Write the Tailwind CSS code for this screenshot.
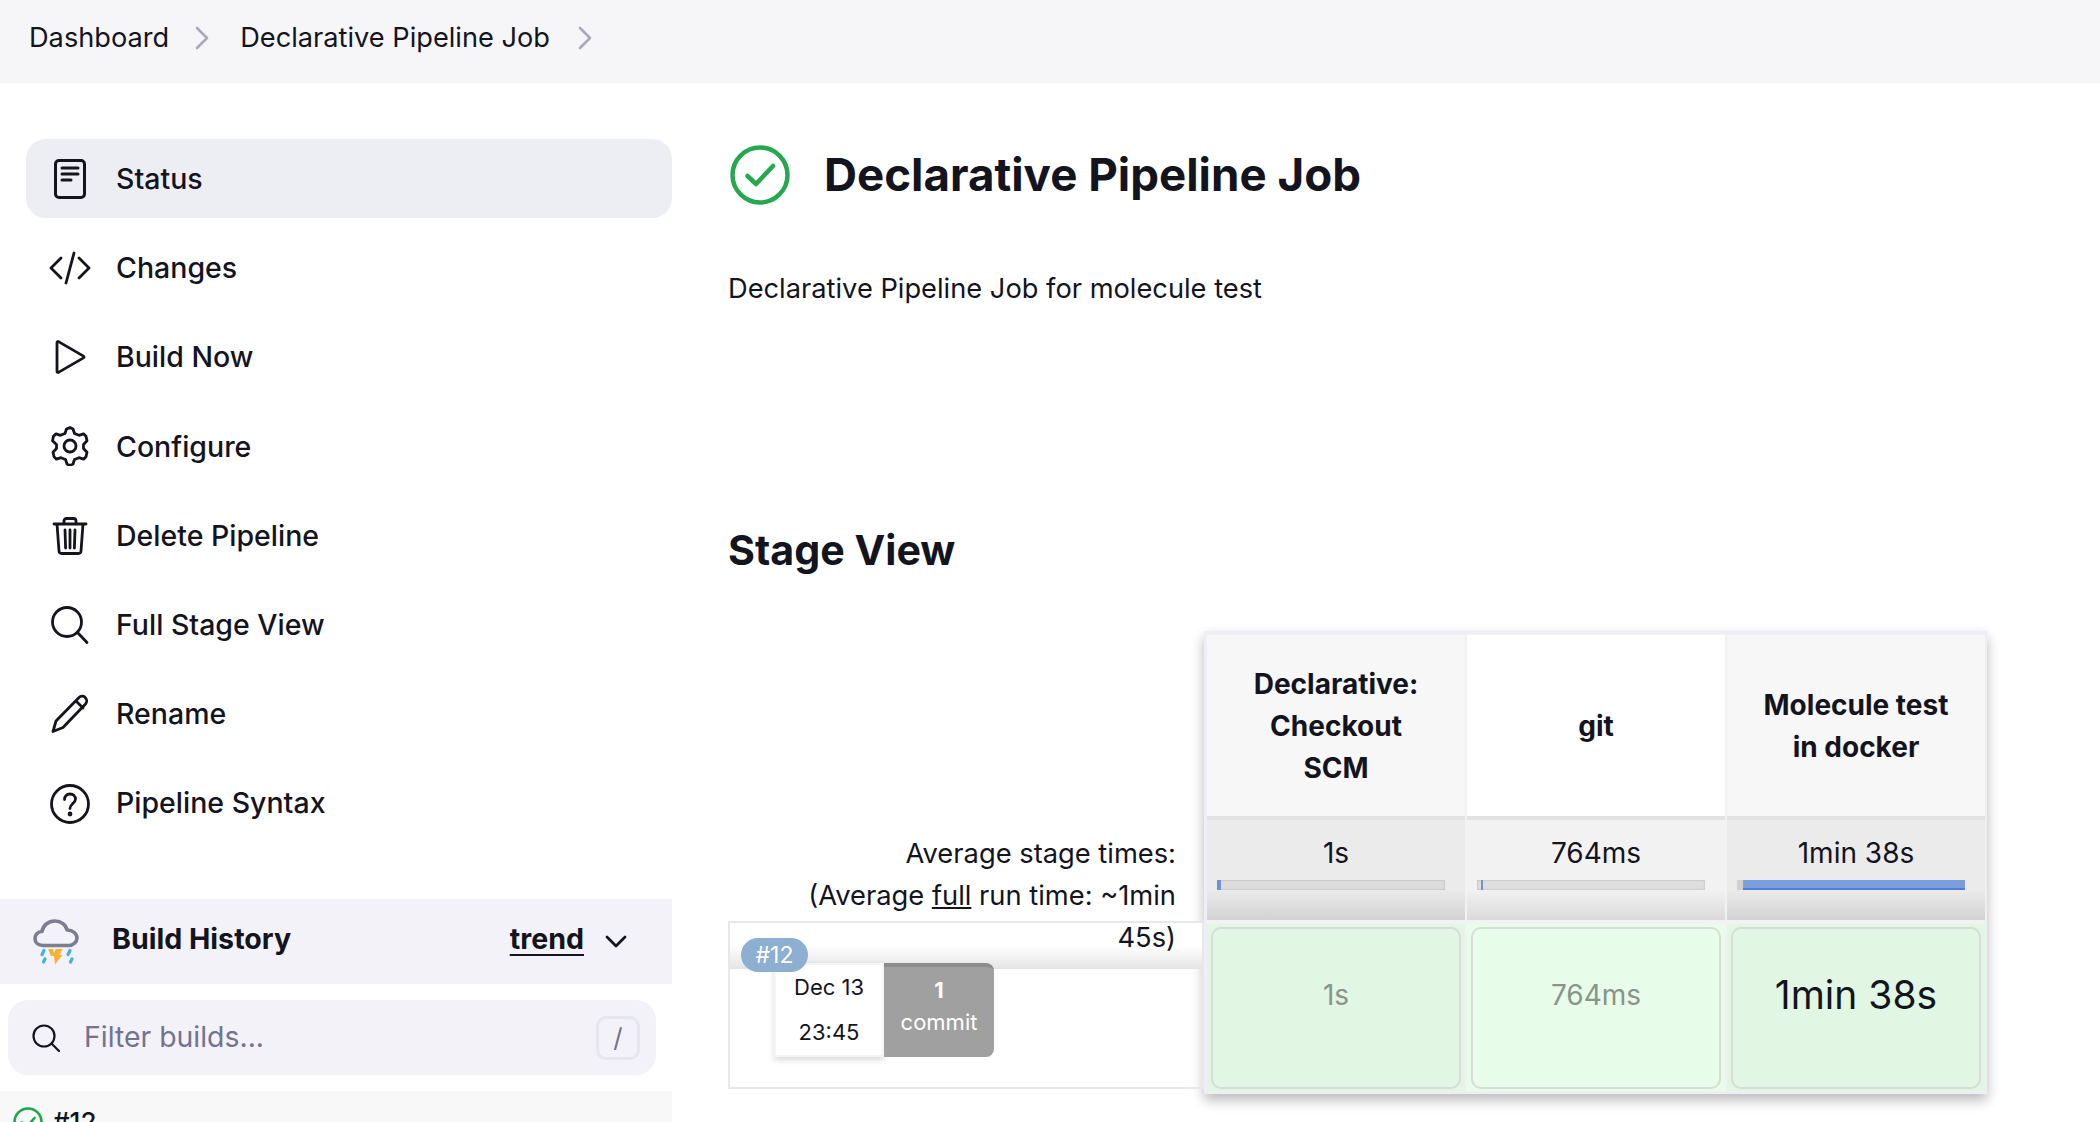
<!DOCTYPE html>
<html lang="en">
<head>
  <meta charset="UTF-8" />
  <title>Declarative Pipeline Job</title>
  <script src="https://cdn.jsdelivr.net/npm/@tailwindcss/browser@4"></script>
</head>
<body class="h-[1122px] overflow-hidden bg-white font-['Inter',sans-serif] text-[#14141f]">

  <!-- Breadcrumb -->
  <div class="flex h-[83px] items-center bg-[#f6f6f9] pb-[7px] pl-[29px] text-[27.2px]">
    <span>Dashboard</span>
    <svg class="ml-[27px] h-[24px] w-[14px] -translate-x-px" viewBox="0 0 14 24" fill="none" stroke="#a9a9b8" stroke-width="2.6" stroke-linecap="round" stroke-linejoin="round"><path d="M2 2l10 10L2 22"/></svg>
    <span class="ml-[30px]">Declarative Pipeline Job</span>
    <svg class="ml-[28px] h-[24px] w-[14px]" viewBox="0 0 14 24" fill="none" stroke="#a9a9b8" stroke-width="2.6" stroke-linecap="round" stroke-linejoin="round"><path d="M2 2l10 10L2 22"/></svg>
  </div>

  <div class="flex">
    <!-- Sidebar -->
    <aside class="w-[672px] shrink-0 pt-[56px]">
      <nav class="pl-[26px] text-[28.5px] font-medium">
        <a class="flex h-[79px] items-center rounded-[20px] bg-[#edeef3]">
          <svg class="ml-[24px] h-[40px] w-[40px]" viewBox="0 0 40 40" fill="none" stroke="#14141f" stroke-width="3" stroke-linecap="round"><rect x="5.5" y="1.5" width="29" height="37" rx="3.5"/><path d="M12 9h16M12 15h16M12 21h9"/></svg>
          <span class="mt-[1px] ml-[26px]">Status</span>
        </a>
        <a class="mt-[10.3px] flex h-[79px] items-center">
          <svg class="ml-[23px] h-[42px] w-[42px]" viewBox="0 0 42 42" fill="none" stroke="#14141f" stroke-width="2.8" stroke-linecap="round" stroke-linejoin="round"><path d="M12 11L2 21l10 10M30 11l10 10-10 10M25 6l-8 30"/></svg>
          <span class="mt-[1px] ml-[25px]">Changes</span>
        </a>
        <a class="mt-[10.3px] flex h-[79px] items-center">
          <svg class="ml-[24px] h-[40px] w-[40px]" viewBox="0 0 40 40" fill="none" stroke="#14141f" stroke-width="2.8" stroke-linejoin="round"><path d="M7 5.5c0-.8.8-1.3 1.5-.9l25 14.5c.7.4.7 1.4 0 1.8l-25 14.500c-.7.4-1.500-.1-1.500-.9z"/></svg>
          <span class="mt-[1px] ml-[26px]">Build Now</span>
        </a>
        <a class="mt-[10.3px] flex h-[79px] items-center">
          <svg class="ml-[24px] h-[40px] w-[40px]" viewBox="0 0 40 40" fill="none" stroke="#14141f" stroke-width="2.8" stroke-linejoin="round"><circle cx="20" cy="20" r="6"/><path d="M20 2l3 1.500 1.500 4.500 4.500 1.800 4.500-1.500 2.500 2.500 1 4.500-3.500 3.700v4l3.500 3.700-1 4.500-2.500 2.500-4.500-1.500-4.500 1.800-1.500 4.500-3 1.500-3-1.500-1.500-4.500-4.500-1.800-4.500 1.500-2.500-2.500-1-4.500 3.500-3.700v-4L2.500 15.300l1-4.500L6 8.300l4.500 1.500L15 8l1.500-4.500z" transform="translate(0 -0.500)"/></svg>
          <span class="mt-[1px] ml-[26px]">Configure</span>
        </a>
        <a class="mt-[10.3px] flex h-[79px] items-center">
          <svg class="ml-[24px] h-[40px] w-[40px]" viewBox="0 0 40 40" fill="none" stroke="#14141f" stroke-width="2.8" stroke-linecap="round" stroke-linejoin="round"><path d="M4 8h32M14 8V5c0-1.500 1-2.500 2.500-2.500h7C25 2.500 26 3.500 26 5v3M7 8l2 27c.1 1.500 1.200 2.500 2.700 2.500h16.600c1.500 0 2.600-1 2.700-2.500L33 8M15 14l.6 18M20 14v18M25 14l-.6 18"/></svg>
          <span class="mt-[1px] ml-[26px]">Delete Pipeline</span>
        </a>
        <a class="mt-[10.3px] flex h-[79px] items-center">
          <svg class="ml-[24px] h-[40px] w-[40px]" viewBox="0 0 40 40" fill="none" stroke="#14141f" stroke-width="2.8" stroke-linecap="round"><circle cx="17" cy="17" r="14.500"/><path d="M27.500 27.500L37 37.500"/></svg>
          <span class="ml-[26px]">Full Stage View</span>
        </a>
        <a class="mt-[10.3px] flex h-[79px] items-center">
          <svg class="ml-[24px] h-[40px] w-[40px]" viewBox="0 0 40 40" fill="none" stroke="#14141f" stroke-width="2.8" stroke-linecap="round" stroke-linejoin="round"><path d="M29 3.500c2-2 5-1.500 6.500.3 1.500 1.800 1.700 4.500-.2 6.400L13 33.500 3 37.500l3-10.500zM26 7l7 7"/></svg>
          <span class="ml-[26px]">Rename</span>
        </a>
        <a class="mt-[10.3px] flex h-[79px] items-center">
          <svg class="ml-[24px] h-[40px] w-[40px]" viewBox="0 0 40 40" fill="none" stroke="#14141f" stroke-width="2.800" stroke-linecap="round"><circle cx="20" cy="20" r="18.500"/><path d="M14.500 15.500c0-3.200 2.400-5.500 5.500-5.500s5.500 2.200 5.500 5c0 4.500-5.500 4.500-5.500 9.500"/><circle cx="20" cy="30" r="1" fill="#14141f"/></svg>
          <span class="ml-[26px]">Pipeline Syntax</span>
        </a>
      </nav>

      <!-- Build history -->
      <div class="mt-[56px] flex h-[85px] items-center bg-[#f2f2f8] pl-[33px] text-[28.6px]">
        <svg class="h-[46px] w-[46px]" viewBox="0 0 46 46" fill="none" stroke-linecap="round">
          <path d="M10 26.500c-5 0-8-3-8-7s3-7 7-7c1-6 6-10.500 13-10.500 6 0 11 4 12 9 6 0 10 4 10 8s-4 7.500-8 7.500z" stroke="#7d7d91" stroke-width="3.600" stroke-linejoin="round"/>
          <path d="M15 30h5l1 4 2-4h6.500l-3 6h3L22 45.500l-1-8.500h-3z" fill="#f9b233"/>
          <path d="M11 31.500l-2 4M12 40l-1.500 3M37 31.500l-2 4M39 40l-1.500 3" stroke="#39b4ea" stroke-width="3.200"/>
        </svg>
        <span class="ml-[33px] pb-[5px] font-bold">Build History</span>
        <span class="ml-auto pb-[5px] font-bold underline underline-offset-[5px]">trend</span>
        <svg class="mr-[45px] ml-[21px] h-[14px] w-[22px]" viewBox="0 0 22 14" fill="none" stroke="#14141f" stroke-width="2.800" stroke-linecap="round" stroke-linejoin="round"><path d="M2 2l9 9 9-9"/></svg>
      </div>

      <div class="mt-[16px] ml-[8px] flex h-[75px] w-[648px] items-center rounded-[20px] bg-[#f2f2f8] pl-[24px] text-[28.4px] text-[#737390]">
        <svg class="h-[28px] w-[28px]" viewBox="0 0 28 28" fill="none" stroke="#14141f" stroke-width="2.200" stroke-linecap="round"><circle cx="12" cy="12" r="10.500"/><path d="M19.500 19.500L27 27"/></svg>
        <span class="ml-[24px]">Filter builds...</span>
        <span class="mr-[16px] ml-auto flex h-[44px] w-[44px] items-center justify-center rounded-[10px] border-[3px] border-[#e6e6ef] text-[26px]">/</span>
      </div>

      <div class="mt-[16px] flex h-[60px] bg-[#f8f8f9] pt-[16px] pl-[13px] text-[26px] font-medium">
        <svg class="h-[30px] w-[30px]" viewBox="0 0 30 30" fill="none" stroke="#1ea64b" stroke-width="2.600" stroke-linecap="round" stroke-linejoin="round"><circle cx="15" cy="15" r="13.500"/><path d="M9 15.500l4.500 4.500 8-9"/></svg>
        <span class="ml-[10px] leading-[30px]">#12</span>
      </div>
    </aside>

    <!-- Main content -->
    <main class="ml-[56px] min-w-0 flex-1 pt-[62px]">
      <div class="flex h-[60px] items-center">
        <svg class="ml-[2px] h-[60px] w-[60px]" viewBox="0 0 60 60" fill="none" stroke="#25a84e" stroke-width="4.500" stroke-linecap="round" stroke-linejoin="round"><circle cx="30" cy="30" r="27.500"/><path d="M17.500 31l8.500 8 17-18"/></svg>
        <h1 class="ml-[34px] text-[45.7px] font-bold">Declarative Pipeline Job</h1>
      </div>
      <p class="mt-[63px] text-[27.25px] leading-[42px]">Declarative Pipeline Job for molecule test</p>

      <h2 class="mt-[215px] text-[41.2px] leading-[50px] font-bold">Stage View</h2>

      <div class="mt-[56px] flex">
        <!-- Left: average text + build row -->
        <div class="flex w-[476px] shrink-0 flex-col pt-[202px] text-[27.3px] leading-[42px]">
          <div class="relative z-10 pr-[28px] text-right">Average stage times:<br />(Average <span class="underline">full</span> run time: ~1min<br />45s)</div>
          <div class="relative -mt-[38px] h-[168px] border-2 border-[#e8e8e8]">
            <div class="h-[46px] bg-gradient-to-b from-white from-50% to-[#e4e4e4]"></div>
            <div class="absolute top-[15px] left-[11px] z-10 flex h-[34px] w-[67px] items-center justify-center rounded-full bg-[#8cafd2] text-[23px] text-white">#12</div>
            <div class="absolute top-[40px] left-[44px] flex h-[94px]">
              <div class="flex w-[110px] flex-col items-center justify-center gap-[22px] border-2 border-[#f4f4f9] bg-white text-[22px] leading-[23px] shadow-[0_3px_6px_rgba(0,0,0,0.15)]">
                <span>Dec 13</span>
                <span>23:45</span>
              </div>
              <div class="flex w-[110px] flex-col items-center rounded-r-[8px] border-t-4 border-[#8c8c8c] bg-[#a0a0a0] pt-[7px] text-[22px] leading-[32px] text-white">
                <span class="font-bold">1</span>
                <span>commit</span>
              </div>
            </div>
          </div>
        </div>

        <!-- Right: stage table -->
        <div class="h-[463px] w-[783px] shrink-0 border-[3px] border-[#eeeef4] bg-[#f2f2f5] shadow-[0_6px_12px_rgba(0,0,0,0.28)]">
          <div class="grid grid-cols-[258px_258px_258px] gap-x-[2px] pt-[1px]">
            <div class="flex h-[181px] items-center justify-center bg-[#f7f7f7] text-center text-[28px] leading-[42px] font-bold">Declarative:<br />Checkout<br />SCM</div>
            <div class="flex h-[181px] items-center justify-center bg-white text-center text-[28px] leading-[42px] font-bold">git</div>
            <div class="flex h-[181px] items-center justify-center bg-[#f7f7f7] text-center text-[28px] leading-[42px] font-bold">Molecule test<br />in docker</div>

            <div class="h-[104px] border-t-4 border-[#e2e2e2] bg-gradient-to-b from-[#ebebeb] from-70% to-[#d2d2d2] pt-[12px] text-center text-[28px] leading-[42px]">
              1s
              <div class="mx-[10px] mt-[6px] h-[10px] w-[228px] bg-[#dcdcdc] shadow-[inset_0_0_2px_rgba(0,0,0,0.25)]"><div class="h-full w-[4px] bg-[#6b93d6]"></div></div>
            </div>
            <div class="h-[104px] border-t-4 border-[#e2e2e2] bg-gradient-to-b from-[#f2f2f2] from-70% to-[#dadada] pt-[12px] text-center text-[28px] leading-[42px]">
              764ms
              <div class="mx-[10px] mt-[6px] h-[10px] w-[228px] bg-[#dedede] pl-[4px] shadow-[inset_0_0_2px_rgba(0,0,0,0.25)]"><div class="h-full w-[2px] bg-[#6b93d6]"></div></div>
            </div>
            <div class="h-[104px] border-t-4 border-[#e2e2e2] bg-gradient-to-b from-[#ebebeb] from-70% to-[#d2d2d2] pt-[12px] text-center text-[28px] leading-[42px]">
              1min 38s
              <div class="mx-[10px] mt-[6px] h-[10px] w-[228px] bg-[#cfcfcf] pl-[6px]"><div class="h-full w-[222px] border-b-2 border-[#4f7fd6] bg-[#7a9fdc]"></div></div>
            </div>

            <div class="mt-[4px] h-[167px] bg-[#e1f6e3] px-[4px] pt-[3px]">
              <div class="flex h-[162px] items-center justify-center rounded-[10px] border-2 border-[#d5ddd6] pb-[26px] text-[28px] text-[#8a948c]">1s</div>
            </div>
            <div class="mt-[4px] h-[167px] bg-[#e8fde9] px-[4px] pt-[3px]">
              <div class="flex h-[162px] items-center justify-center rounded-[10px] border-2 border-[#d5ddd6] pb-[26px] text-[28px] text-[#8a948c]">764ms</div>
            </div>
            <div class="mt-[4px] h-[167px] bg-[#e1f6e3] px-[4px] pt-[3px]">
              <div class="flex h-[162px] items-center justify-center rounded-[10px] border-2 border-[#d5ddd6] pb-[26px] text-[39px]">1min 38s</div>
            </div>
          </div>
        </div>
      </div>
    </main>
  </div>
</body>
</html>
